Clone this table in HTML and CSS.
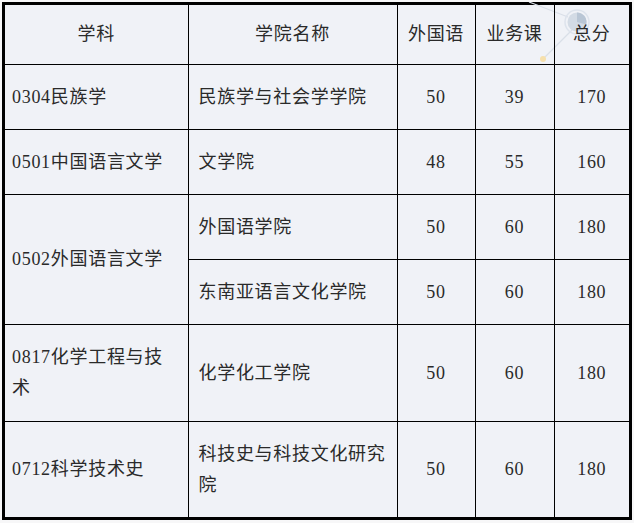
FILE: index.html
```html
<!DOCTYPE html>
<html lang="zh-CN">
<head>
<meta charset="utf-8">
<title>学科分数线</title>
<link rel="stylesheet" href="styles.css">
</head>
<body>
<div class="frame">
  <table class="tbl">
    <colgroup>
      <col class="c1"><col class="c2"><col class="c3"><col class="c4"><col class="c5">
    </colgroup>
    <tr class="r-head">
      <td class="ctr">学科</td>
      <td class="ctr">学院名称</td>
      <td class="ctr">外国语</td>
      <td class="ctr">业务课</td>
      <td class="ctr">总分</td>
    </tr>
    <tr class="r-std">
      <td class="subj">0304民族学</td>
      <td class="dept">民族学与社会学学院</td>
      <td class="ctr">50</td>
      <td class="ctr">39</td>
      <td class="ctr">170</td>
    </tr>
    <tr class="r-std">
      <td class="subj">0501中国语言文学</td>
      <td class="dept">文学院</td>
      <td class="ctr">48</td>
      <td class="ctr">55</td>
      <td class="ctr">160</td>
    </tr>
    <tr class="r-std">
      <td class="subj" rowspan="2">0502外国语言文学</td>
      <td class="dept">外国语学院</td>
      <td class="ctr">50</td>
      <td class="ctr">60</td>
      <td class="ctr">180</td>
    </tr>
    <tr class="r-std">
      <td class="dept">东南亚语言文化学院</td>
      <td class="ctr">50</td>
      <td class="ctr">60</td>
      <td class="ctr">180</td>
    </tr>
    <tr class="r-tall">
      <td class="subj">0817化学工程与技术</td>
      <td class="dept">化学化工学院</td>
      <td class="ctr">50</td>
      <td class="ctr">60</td>
      <td class="ctr">180</td>
    </tr>
    <tr class="r-last">
      <td class="subj">0712科学技术史</td>
      <td class="dept">科技史与科技文化研究院</td>
      <td class="ctr">50</td>
      <td class="ctr">60</td>
      <td class="ctr">180</td>
    </tr>
  </table>
  <svg class="deco" width="110" height="70" viewBox="0 0 110 70" aria-hidden="true">
    <polyline points="5,0 13,3 44,15" fill="none" stroke="#d9dfe8" stroke-width="1.2"/>
    <line x1="50" y1="26" x2="19" y2="57" stroke="#d9dfe8" stroke-width="1.2"/>
    <circle cx="53" cy="20" r="12" fill="none" stroke="#dde3ec" stroke-width="1.5"/>
    <circle cx="53" cy="20" r="9.5" fill="#d3dbe5"/>
    <path d="M53 10.5 A9.5 9.5 0 0 1 62.2 22.5 L53 20 Z" fill="#b9c6d5"/>
    <circle cx="19" cy="57" r="3" fill="#f6e0ac"/>
  </svg>
</div>
</body>
</html>
```
FILE: styles.css
```css
html, body {
  margin: 0;
  padding: 0;
  background: #f7f7f8;
}
body {
  padding: 2px;
}
.frame {
  position: relative;
  width: 624px;
  border: 3px solid #000;
  background: #f0f2f7;
}
.tbl {
  position: relative;
  z-index: 1;
  width: 624px;
  table-layout: fixed;
  border-collapse: collapse;
  border-style: hidden;
  font-family: "Liberation Serif", "Noto Sans CJK SC", serif;
  font-size: 18px;
  letter-spacing: 0.7px;
  color: #2a2a2a;
}
.c1 { width: 183px; }
.c2 { width: 209px; }
.c3 { width: 78px; }
.c4 { width: 79px; }
.c5 { width: 75px; }
.tbl td {
  border: 1px solid #000;
  padding: 0;
  line-height: 31px;
  vertical-align: middle;
}
.r-head td { height: 59px; }
.r-std td { height: 64px; }
.r-tall td { height: 96px; }
.r-last td { height: 95px; }
.ctr { text-align: center; }
.subj { padding: 0 12px 0 7px !important; }
.dept { padding: 0 8px 0 10px !important; }
.deco {
  position: absolute;
  top: -3px;
  right: -5px;
  z-index: 0;
  pointer-events: none;
}
```
